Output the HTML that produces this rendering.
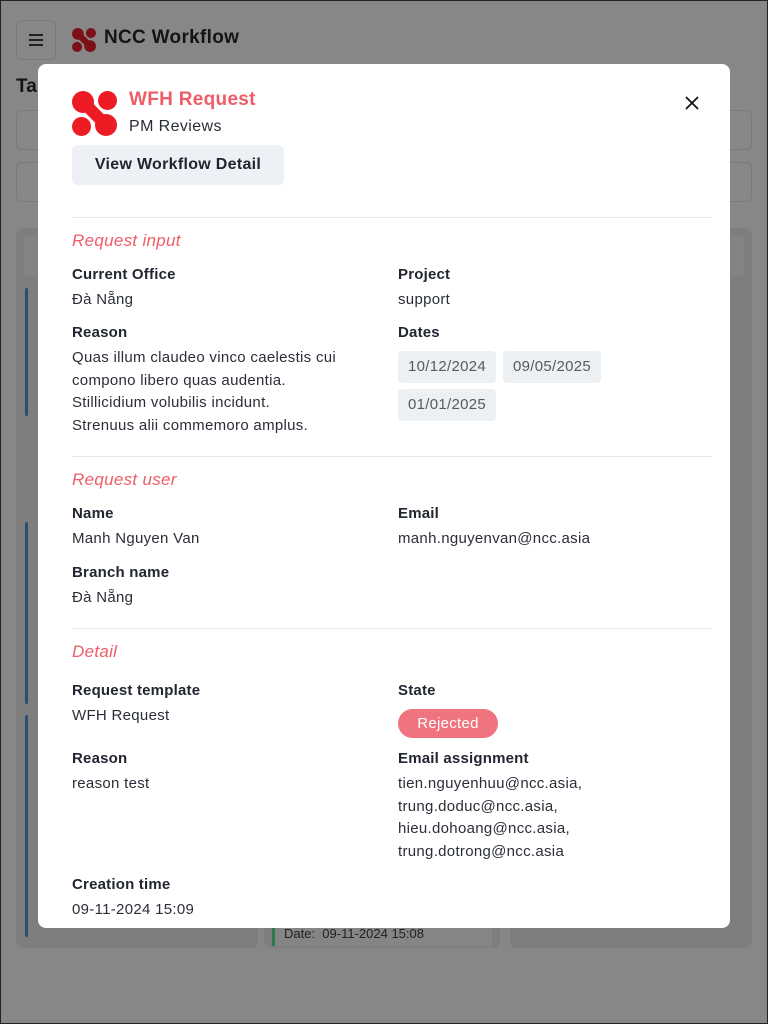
<!DOCTYPE html>
<html><head><meta charset="utf-8"><style>
*{box-sizing:border-box;margin:0;padding:0}
body{width:768px;height:1024px;overflow:hidden;font-family:"Liberation Sans",sans-serif;background:#878787;position:relative;color:#1f2430}
.frame{position:absolute;inset:0;border:1px solid #222;}
.a{position:absolute}
.modal{position:absolute;left:38px;top:64px;width:692px;height:864px;background:#fff;border-radius:8px;overflow:hidden}
.lbl{position:absolute;font-size:15px;font-weight:bold;color:#222631;letter-spacing:0.2px}
.val{position:absolute;font-size:15px;color:#2a2e38;line-height:22.5px;letter-spacing:0.3px}
.sec{position:absolute;font-size:17px;font-style:italic;color:#ef5c68;letter-spacing:0.3px}
.hr{position:absolute;left:34px;width:640px;height:1px;background:#e8e9ec}
.chip{position:absolute;background:#edf0f3;border-radius:4px;height:32px;line-height:32px;padding:0 10px;font-size:15px;color:#555a63;letter-spacing:0.3px}
.bar{position:absolute;left:25px;width:3px;background:#2c4f70;border-radius:2px}
</style></head><body>
<div class="a" style="left:16px;top:20px;width:40px;height:40px;border:1px solid #7a7a7a;border-radius:6px"></div>
<div class="a" style="left:29px;top:34px;width:14px;height:2px;background:#222;box-shadow:0 5px 0 #222,0 10px 0 #222"></div>
<svg class="a" style="left:72px;top:28px" width="24" height="24" viewBox="0 0 45 45"><g fill="#7c1115"><circle cx="11" cy="11" r="11"/><circle cx="34" cy="34" r="11"/><circle cx="35.5" cy="9.5" r="9.5"/><circle cx="9.5" cy="35.5" r="9.5"/><path d="M11 11L34 34" stroke="#7c1115" stroke-width="12"/></g></svg>
<div class="a" style="left:104px;top:27px;font-size:19px;font-weight:bold;color:#141414;letter-spacing:0.3px">NCC Workflow</div>
<div class="a" style="left:16px;top:76px;font-size:19px;font-weight:bold;color:#141414">Ta</div>
<div class="a" style="left:16px;top:110px;width:736px;height:40px;border:1px solid #7a7a7a;border-radius:6px"></div>
<div class="a" style="left:16px;top:162px;width:736px;height:40px;border:1px solid #7a7a7a;border-radius:6px"></div>
<div class="a" style="left:16px;top:228px;width:242px;height:720px;background:#7e7e7e;border-radius:6px"></div>
<div class="a" style="left:24px;top:236px;width:226px;height:40px;background:#848484;border-radius:4px"></div>
<div class="a" style="left:264px;top:228px;width:236px;height:720px;background:#7e7e7e;border-radius:6px"></div>
<div class="a" style="left:510px;top:228px;width:242px;height:720px;background:#7e7e7e;border-radius:6px"></div>
<div class="a" style="left:724px;top:236px;width:20px;height:40px;background:#848484;border-radius:4px"></div>
<div class="a" style="left:272px;top:900px;width:220px;height:46px;background:#858585;border-left:3px solid #2b7a4e"></div>
<div class="a" style="left:284px;top:926px;font-size:13px;color:#222">Date:&nbsp; 09-11-2024 15:08</div>
<div class="bar" style="top:288px;height:128px"></div>
<div class="bar" style="top:522px;height:182px"></div>
<div class="bar" style="top:715px;height:222px"></div>
<div class="frame"></div>

<div class="modal">
<svg class="a" style="left:34px;top:27px" width="45" height="45" viewBox="0 0 45 45"><g fill="#ed1c24"><circle cx="11" cy="11" r="11"/><circle cx="34" cy="34" r="11"/><circle cx="35.5" cy="9.5" r="9.5"/><circle cx="9.5" cy="35.5" r="9.5"/><path d="M11 11L34 34" stroke="#ed1c24" stroke-width="12"/></g></svg>
<div class="a" style="left:91px;top:25px;font-size:19px;font-weight:bold;color:#ef5c68;letter-spacing:0.3px">WFH Request</div>
<div class="a" style="left:91px;top:54px;font-size:16px;color:#2a2e38;letter-spacing:0.4px">PM Reviews</div>
<div class="a" style="left:34px;top:81px;width:212px;height:40px;background:#edf1f5;border-radius:6px;font-size:16px;font-weight:bold;line-height:40px;text-align:center;color:#1f2430;letter-spacing:0.3px">View Workflow Detail</div>
<svg class="a" style="left:646px;top:31px" width="16" height="16" viewBox="0 0 16 16"><path d="M2 2L14 14M14 2L2 14" stroke="#111" stroke-width="1.8"/></svg>
<div class="hr" style="top:153px"></div>
<div class="sec" style="left:34px;top:167px">Request input</div>
<div class="lbl" style="left:34px;top:202px">Current Office</div>
<div class="val" style="left:34px;top:225px">Đà Nẵng</div>
<div class="lbl" style="left:360px;top:202px">Project</div>
<div class="val" style="left:360px;top:225px">support</div>
<div class="lbl" style="left:34px;top:260px">Reason</div>
<div class="val" style="left:34px;top:283px;width:290px">Quas illum claudeo vinco caelestis cui<br>compono libero quas audentia.<br>Stillicidium volubilis incidunt.<br>Strenuus alii commemoro amplus.</div>
<div class="lbl" style="left:360px;top:260px">Dates</div>
<div class="chip" style="left:360px;top:287px">10/12/2024</div>
<div class="chip" style="left:465px;top:287px">09/05/2025</div>
<div class="chip" style="left:360px;top:325px">01/01/2025</div>
<div class="hr" style="top:392px"></div>
<div class="sec" style="left:34px;top:406px">Request user</div>
<div class="lbl" style="left:34px;top:441px">Name</div>
<div class="val" style="left:34px;top:464px">Manh Nguyen Van</div>
<div class="lbl" style="left:360px;top:441px">Email</div>
<div class="val" style="left:360px;top:464px">manh.nguyenvan@ncc.asia</div>
<div class="lbl" style="left:34px;top:500px">Branch name</div>
<div class="val" style="left:34px;top:523px">Đà Nẵng</div>
<div class="hr" style="top:564px"></div>
<div class="sec" style="left:34px;top:578px">Detail</div>
<div class="lbl" style="left:34px;top:618px">Request template</div>
<div class="val" style="left:34px;top:641px">WFH Request</div>
<div class="lbl" style="left:360px;top:618px">State</div>
<div class="a" style="left:360px;top:645px;width:100px;height:29px;border-radius:15px;background:#ef7480;color:#fff;font-size:15px;line-height:29px;text-align:center;letter-spacing:0.3px">Rejected</div>
<div class="lbl" style="left:34px;top:686px">Reason</div>
<div class="val" style="left:34px;top:709px">reason test</div>
<div class="lbl" style="left:360px;top:686px">Email assignment</div>
<div class="val" style="left:360px;top:709px">tien.nguyenhuu@ncc.asia,<br>trung.doduc@ncc.asia,<br>hieu.dohoang@ncc.asia,<br>trung.dotrong@ncc.asia</div>
<div class="lbl" style="left:34px;top:812px">Creation time</div>
<div class="val" style="left:34px;top:835px">09-11-2024 15:09</div>
</div>
</body></html>
